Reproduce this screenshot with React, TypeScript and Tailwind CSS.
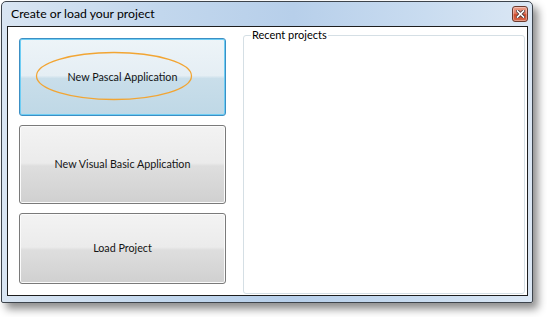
import React from 'react'

const font = { fontFamily: 'Lato, "Noto Sans", sans-serif' }

function CloseButton() {
  return (
    <button
      type="button"
      aria-label="Close"
      className="flex h-[16px] w-[16px] items-center justify-center rounded-[3px] border border-[#6b3a2e] bg-[linear-gradient(to_bottom,#eca08c_0%,#e07b62_45%,#cc4a2c_55%,#d9694a_100%)] shadow-[inset_0_0_0_1px_rgba(255,255,255,0.35)]"
    >
      <svg width="9" height="8" viewBox="0 0 9 8" aria-hidden="true">
        <path d="M1.5 1 L7.5 7 M7.5 1 L1.5 7" stroke="#4a3434" strokeWidth="3.2" strokeLinecap="square" />
        <path d="M1.5 1 L7.5 7 M7.5 1 L1.5 7" stroke="#ffffff" strokeWidth="1.7" strokeLinecap="square" />
      </svg>
    </button>
  )
}

function ActionButton({
  label,
  height,
  selected = false,
}: {
  label: string
  height: string
  selected?: boolean
}) {
  return (
    <button
      type="button"
      className={
        selected
          ? `relative flex w-[207px] ${height} items-center justify-center rounded-[3px] border border-[#3c8fc4] bg-[linear-gradient(to_bottom,#edf4f8_0%,#e5eef4_48%,#c9deea_52%,#bfd8e6_100%)] text-[10.75px] text-[#141414] shadow-[inset_0_0_0_1px_#6dcdf4]`
          : `relative flex w-[207px] ${height} items-center justify-center rounded-[3px] border border-[#7a7a7a] bg-[linear-gradient(to_bottom,#f3f3f3_0%,#ebebeb_48%,#dedede_52%,#d0d0d0_100%)] text-[10.75px] text-[#141414] shadow-[inset_0_0_0_1px_#fbfbfb]`
      }
    >
      {selected ? (
        <svg
          className="pointer-events-none absolute left-[15px] top-[12px]"
          width="158"
          height="50"
          viewBox="0 0 158 50"
          aria-hidden="true"
        >
          <ellipse cx="79" cy="25" rx="77.5" ry="23.5" fill="none" stroke="#f2a533" strokeWidth="1.3" />
        </svg>
      ) : null}
      <span className="relative">{label}</span>
    </button>
  )
}

export default function App() {
  return (
    <div className="min-h-[317px] w-[547px] bg-white pl-px pt-px" style={font}>
      <div className="flex h-[302px] w-[532px] flex-col rounded-t-[5px] rounded-b-[2px] border border-[#3d444c] bg-[linear-gradient(to_right,#d9e5f2_0%,#c2d7ed_30%,#b7cfea_55%,#c9dcf0_80%,#dbe7f4_100%)] shadow-[5px_6px_8px_rgba(0,0,0,0.45)]">
        <div className="flex h-[24px] shrink-0 items-start justify-between pl-[9px] pr-[4px]">
          <span className="pt-[4px] text-[12.25px] leading-[16px] text-black">Create or load your project</span>
          <div className="pt-[4px]">
            <CloseButton />
          </div>
        </div>
        <div className="flex-1 pb-[6px] pl-[5px] pr-[4px]">
          <div className="flex h-full border border-[#1e1e1e] bg-white">
            <div className="flex flex-col gap-[9px] pl-[11px] pt-[11px]">
              <ActionButton label="New Pascal Application" height="h-[78px]" selected />
              <ActionButton label="New Visual Basic Application" height="h-[79px]" />
              <ActionButton label="Load Project" height="h-[71px]" />
            </div>
            <fieldset className="mb-px ml-[17px] mr-[2px] min-w-0 flex-1 rounded-[3px] border border-[#d5dfe5] px-0">
              <legend className="ml-[7px] px-px text-[11px] leading-[16px] text-black">Recent projects</legend>
            </fieldset>
          </div>
        </div>
      </div>
    </div>
  )
}
